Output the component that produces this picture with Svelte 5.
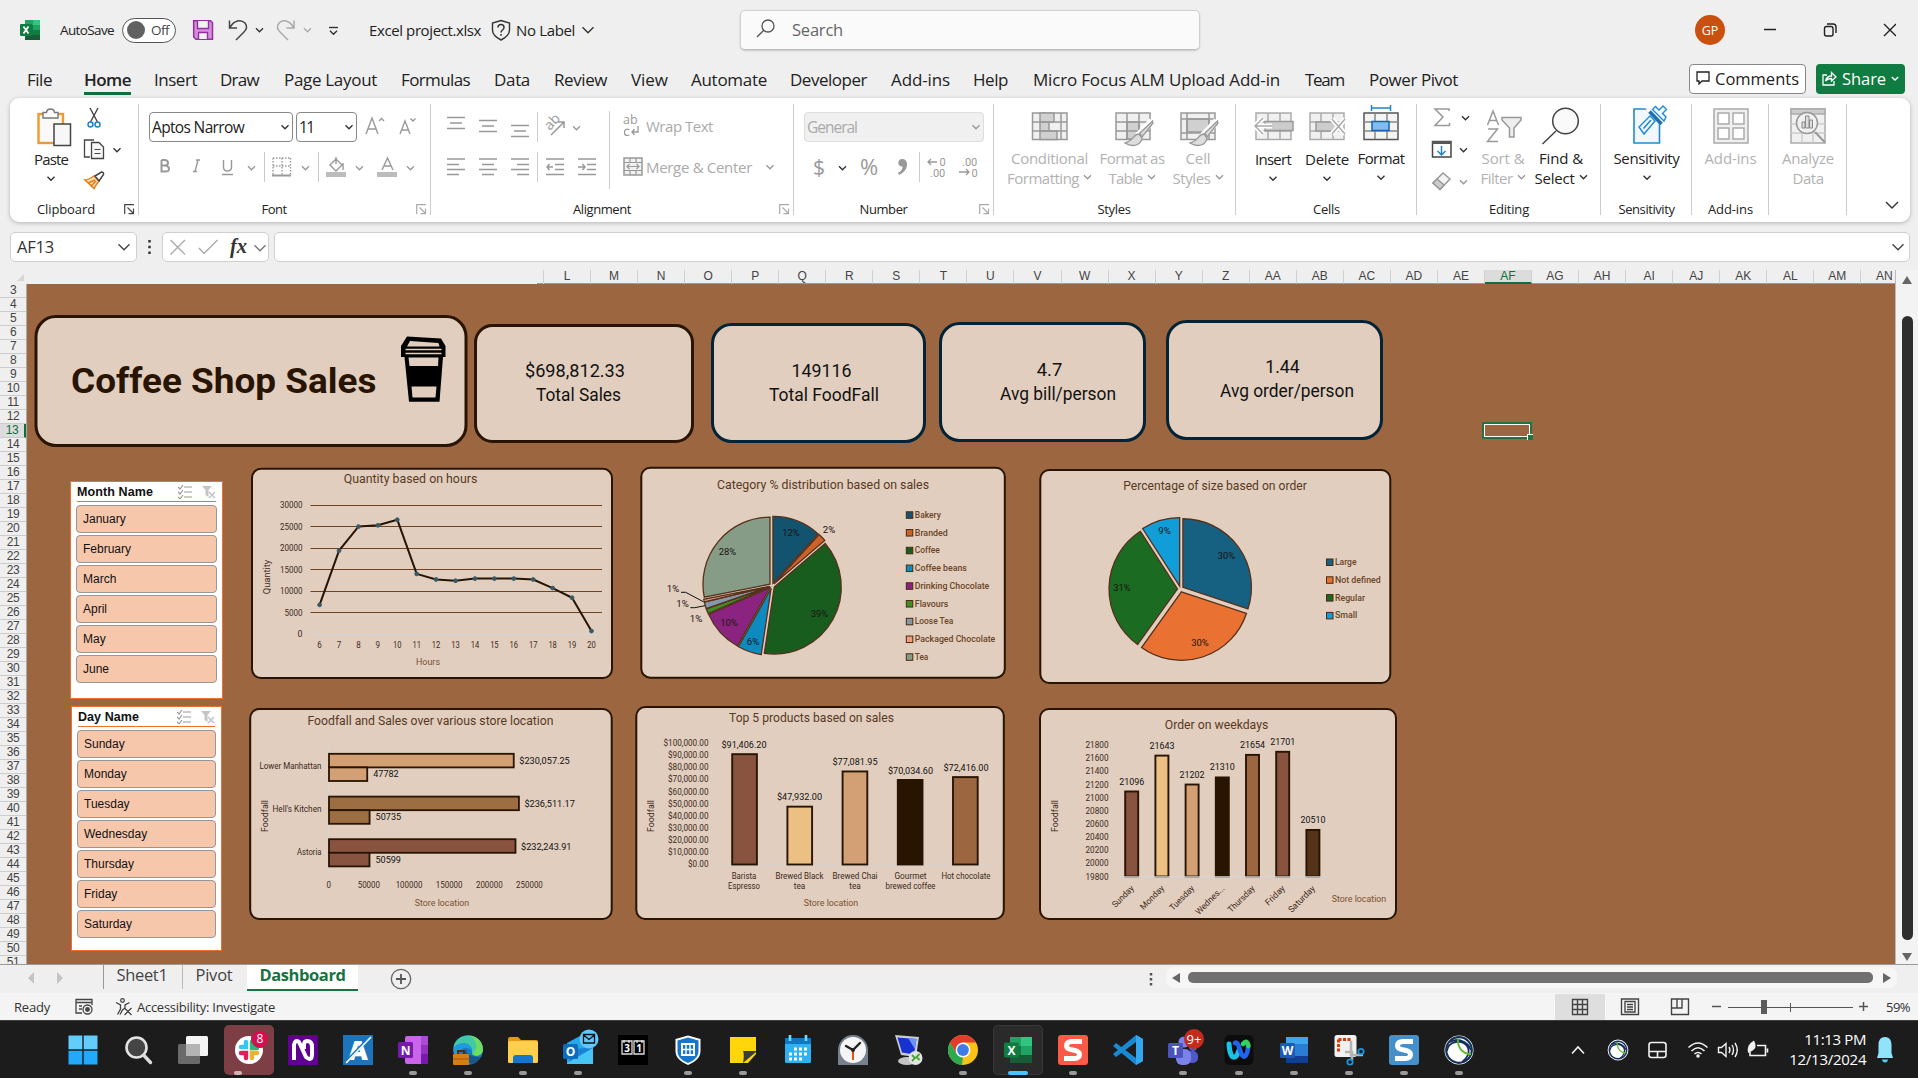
<script>
  // Spreads a label's letters so that it fills the advance width given in pixels.
  function fit(node, width) {
    const natural = node.getBoundingClientRect().width;
    const n = node.textContent.length;
    if (n > 0) node.style.letterSpacing = ((width - natural) / n).toFixed(3) + 'px';
  }

  const tabs = [
    ['File', 27, 25], ['Home', 84, 47], ['Insert', 154, 43], ['Draw', 220, 39], ['Page Layout', 284, 93],
    ['Formulas', 401, 69], ['Data', 494, 36], ['Review', 554, 53], ['View', 631, 37], ['Automate', 691, 76],
    ['Developer', 790, 77], ['Add-ins', 891, 59], ['Help', 973, 35], ['Micro Focus ALM Upload Add-in', 1033, 247],
    ['Team', 1305, 39], ['Power Pivot', 1369, 89]
  ].map(([name, x, w], i, all) => ({ name, w, gap: i ? x - all[i - 1][1] - all[i - 1][2] : x }));

  const columns = ['L','M','N','O','P','Q','R','S','T','U','V','W','X','Y','Z','AA','AB','AC','AD','AE','AF','AG','AH','AI','AJ','AK','AL','AM','AN'];
  const rows = Array.from({ length: 49 }, (_, i) => i + 3);
  const months = ['January', 'February', 'March', 'April', 'May', 'June'];
  const days = ['Sunday', 'Monday', 'Tuesday', 'Wednesday', 'Thursday', 'Friday', 'Saturday'];

  const DARK = '#281400';
  const hours = [[6,6850],[7,19450],[8,25050],[9,25350],[10,26650],[11,14050],[12,12750],[13,12450],[14,12950],[15,12950],[16,12950],[17,12750],[18,10750],[19,8500],[20,750]];
  const hx = (i) => 319.6 + i * 19.42;
  const hy = (v) => 634.3 - v * 0.0043;
  const line = hours.map(([, v], i) => `${hx(i)},${hy(v)}`).join(' ');

  function slices(data, cx, cy, r, e) {
    const total = data.reduce((s, d) => s + d.v, 0);
    let a = 0;
    return data.map((d) => {
      const a0 = a, a1 = (a += (d.v / total) * Math.PI * 2), m = (a0 + a1) / 2;
      const ox = cx + Math.sin(m) * e, oy = cy - Math.cos(m) * e;
      const p = (t) => `${(ox + Math.sin(t) * r).toFixed(2)} ${(oy - Math.cos(t) * r).toFixed(2)}`;
      return { ...d, d: `M${ox} ${oy}L${p(a0)}A${r} ${r} 0 ${a1 - a0 > Math.PI ? 1 : 0} 1 ${p(a1)}Z` };
    });
  }
  const category = slices([
    { n: 'Bakery', v: 11.78, c: '#12536f', w: 26, l: ['12%', 791, 536] },
    { n: 'Branded', v: 1.95, c: '#cb622a', w: 33, l: ['2%', 829, 533] },
    { n: 'Coffee', v: 38.63, c: '#185c1e', w: 25, l: ['39%', 819.5, 617] },
    { n: 'Coffee beans', v: 5.74, c: '#0d8abf', w: 52, l: ['6%', 753, 645] },
    { n: 'Drinking Chocolate', v: 10.36, c: '#8b2480', w: 74.5, l: ['10%', 729, 626] },
    { n: 'Flavours', v: 1.2, c: '#3f8f27', w: 33.5, l: ['1%', 696, 622] },
    { n: 'Loose Tea', v: 1.6, c: '#8597a9', w: 38.5, l: ['1%', 682.5, 607] },
    { n: 'Packaged Chocolate', v: 0.63, c: '#f09c84', w: 80.5, l: ['1%', 673, 592] },
    { n: 'Tea', v: 28.1, c: '#869c86', w: 13.5, l: ['28%', 727.5, 555] }
  ], 772, 585.8, 67, 2.6);
  const sizes = slices([
    { n: 'Large', v: 30.1, c: '#166082', w: 21.5, l: ['30%', 1226.5, 559] },
    { n: 'Not defined', v: 29.8, c: '#e97132', w: 45.7, l: ['30%', 1200, 646] },
    { n: 'Regular', v: 31, c: '#1b6b22', w: 30, l: ['31%', 1122, 591] },
    { n: 'Small', v: 9.1, c: '#109dd8', w: 22.3, l: ['9%', 1164.5, 534] }
  ], 1180.5, 589, 68.5, 3);

  const stores = [
    { n: 'Lower Manhattan', w: 62, y: 753.8, s: 230057.25, sl: '$230,057.25', f: 47782, c: '#d2a074' },
    { n: "Hell's Kitchen", w: 49, y: 796.6, s: 236511.17, sl: '$236,511.17', f: 50735, c: '#9c6e42' },
    { n: 'Astoria', w: 24.5, y: 839.2, s: 232243.91, sl: '$232,243.91', f: 50599, c: '#88543f' }
  ];
  const products = [
    { n: ['Barista', 'Espresso'], w: [24.5, 32], v: 91406.2, l: '$91,406.20', c: '#88543f', ly: 747.5 },
    { n: ['Brewed Black', 'tea'], w: [48, 11.5], v: 47932, l: '$47,932.00', c: '#ecbf83', ly: 799.5 },
    { n: ['Brewed Chai', 'tea'], w: [45, 11.5], v: 77081.95, l: '$77,081.95', c: '#d2a074', ly: 764.5 },
    { n: ['Gourmet', 'brewed coffee'], w: [32, 50], v: 70034.6, l: '$70,034.60', c: DARK, ly: 773.5 },
    { n: ['Hot chocolate'], w: [49], v: 72416, l: '$72,416.00', c: '#9c6640', ly: 770.5 }
  ];
  const weekdays = [
    { n: 'Sunday', v: 21096, c: '#88543f', ly: 785, w: 27 }, { n: 'Monday', v: 21643, c: '#ecbf83', ly: 749, w: 30 },
    { n: 'Tuesday', v: 21202, c: '#d2a074', ly: 778.3, w: 31 }, { n: 'Wednes...', v: 21310, c: DARK, ly: 770, w: 37 },
    { n: 'Thursday', v: 21654, c: '#9c6640', ly: 748, w: 34 }, { n: 'Friday', v: 21701, c: '#88543f', ly: 745.3, w: 24 },
    { n: 'Saturday', v: 20510, c: '#553318', ly: 823, w: 34 }
  ];

  const letter = (ch, x, y, s, f = '#fff', w = 700) => `<text x="${x}" y="${y}" font-family="Open Sans, sans-serif" font-weight="${w}" font-size="${s}" fill="${f}" text-anchor="middle">${ch}</text>`;
  const office = (ch, a, b, c, d) => `<rect x="-8" y="-13" width="22" height="26" rx="2" fill="${b}"/><path d="M-8-13H14v7H-8z" fill="${a}"/><path d="M-8 6H14v7H-8z" fill="${c}"/><rect x="-14" y="-7" width="15" height="15" rx="1.5" fill="${d}"/>${letter(ch, -6.5, 5, 12)}`;
  const orb = '<circle r="14.5" fill="#fff"/><circle r="12.8" fill="none" stroke="#16325c" stroke-width="2.2"/><path d="M-12 1C-11-9 3-11 8-4C12 2 8 9 3 12M-9-8C-2-12 8-10 12 0" fill="none" stroke="#16325c" stroke-width="1.8"/><path d="M-1-12C-2-3 3 4 12 4" fill="none" stroke="#62b82c" stroke-width="1.8"/>';
  const apps = [
    { art: '<path d="M-14.5-14.5H-.7V-.7H-14.5zM.7-14.5H14.5V-.7H.7z" fill="#62cdfb"/><path d="M-14.5.7H-.7V14.5H-14.5zM.7.7H14.5V14.5H.7z" fill="#22a9fa"/>' },
    { art: '<circle cx="-1.5" cy="-2.5" r="10" fill="#454545" stroke="#e4e4e4" stroke-width="2.6"/><path d="M6 5.5L12.5 12.5" stroke="#ddd" stroke-width="3.4" stroke-linecap="round"/>' },
    { art: '<rect x="-15" y="-6" width="22" height="20" rx="1.5" fill="#6a6a6a"/><rect x="-7" y="-14" width="22" height="20" rx="1.5" fill="#f4f4f4"/><path d="M-7-6H7V6H-7z" fill="#b4b4b4"/>' },
    { hot: true, run: 'slack', art: '<circle r="14" fill="#fff"/><g stroke-width="4.4" stroke-linecap="round"><path d="M-3-8V-3H-8" stroke="#36c5f0" fill="none"/><path d="M8-2H3V-8" stroke="#2eb67d" fill="none"/><path d="M-8 3H-3V8" stroke="#e01e5a" fill="none"/><path d="M3 8V3H8" stroke="#ecb22e" fill="none"/></g><circle cx="11" cy="-11" r="8.6" fill="#d80c50" stroke="#7d3f45"/>' + letter('8', 11, -6.6, 12, '#fff', 400) },
    { art: '<path d="M-15-15H15V15H-15z" fill="#5f0093"/><path d="M-9 10V-5Q-8-11-4-8L3 7Q9 12 9 4V-3Q9-9 4-9Q1-9 1-5V-1" fill="none" stroke="#fff" stroke-width="4"/>' },
    { art: '<path d="M-15-15H15V15H-15z" fill="#1c75bc"/>' + letter('A', 0, 10, 27, '#fff', 800) + '<path d="M12-13L-13 13" stroke="#1c75bc" stroke-width="3"/><path d="M13-13L-12 13" stroke="#fff" stroke-width="1.6"/>' },
    { run: 1, art: '<rect x="-8" y="-14" width="23" height="28" rx="2" fill="#ca64ea"/><path d="M8-14H15V-5H8z" fill="#ae4bd5"/><path d="M8-5H15V4H8z" fill="#9332bf"/><path d="M8 4H15V14H8z" fill="#7719aa"/><rect x="-15" y="-8" width="15" height="16" rx="1.5" fill="#7719aa"/>' + letter('N', -7.5, 4.5, 12) },
    { run: 1, art: '<circle r="14.8" fill="#1679c4"/><path d="M-14.5-2C-13-19 15-19 15 0C14 8 3 7 4 1C4-8-9-9-14.5-2Z" fill="#42c8a7"/><path d="M2-14.5C10-13 15-8 15 0C14 6 8 7 4 4C12-2 8-10 2-14.5Z" fill="#6edb62"/><path d="M-14.5-2C-9-9 3-8 4 1C0-4-8-3-9 5C-13 8-15 3-14.5-2Z" fill="#1c9be4"/><path d="M-2-1Q-2 7 14 7Q10 13 4 14Q-4 11-5 4Z" fill="#1c1c1c" opacity=".35"/><rect x="-15" y="4" width="16" height="11" rx="1" fill="#d67d14"/><path d="M-10 4V1H-4V4" fill="none" stroke="#5b2c05" stroke-width="2"/><path d="M-15 9H1" stroke="#a65609"/>' },
    { run: 1, art: '<path d="M-15-11Q-15-13-13-13H-5L-2-10H13Q15-10 15-8V6H-15z" fill="#e29b13"/><rect x="-15" y="-9" width="30" height="22" rx="1.5" fill="#ffcf4d"/><path d="M-10 13V8Q-10 5-7 5H7Q10 5 10 8V13z" fill="#1477cf"/>' },
    { run: 1, art: '<path d="M-11-7L2-14L15-4V13H-11z" fill="#28a8ea"/><path d="M-11 0L15-3V14H-8z" fill="#1a82d4"/><path d="M-11 13L15-2V14H-11z" fill="#48c5f5"/><rect x="-15" y="-6" width="15" height="15" rx="1.5" fill="#0f6cbd"/>' + letter('O', -7.5, 6, 12) + '<circle cx="11" cy="-11" r="9.5" fill="#60c8fa"/><path d="M5.5-15.5H16.5V-7H5.5zM5.5-15L11-10.5L16.5-15" fill="none" stroke="#111" stroke-width="1.3"/>' },
    { art: '<path d="M-15-15H15V15H-15z" fill="#000"/><path d="M-11-9H-1V4H-11zM1-9H11V4H1zM-9-10V-7M-4-10V-7M4-10V-7M9-10V-7" fill="none" stroke="#ddd" stroke-width="1.3"/>' + letter('3', -6, 1.5, 10) + letter('1', 6, 1.5, 10) },
    { run: 1, art: '<path d="M0-14.5L12.5-11V1C12.5 8 7 12 0 15C-7 12-12.5 8-12.5 1V-11Z" fill="#fff"/><path d="M0-12.5L10.5-9.5V1C10.5 7 6 10.5 0 13C-6 10.5-10.5 7-10.5 1V-9.5Z" fill="#1776c9"/><path d="M-6-6H6V5H-6z" fill="none" stroke="#fff" stroke-width="2"/><path d="M-6-.5H6M-2-6V5M2-6V5" stroke="#fff" stroke-width="1.4"/>' },
    { run: 1, art: '<path d="M-13-13H13V4L5 13H-13z" fill="#ffd60a"/><path d="M0 13C1 8 1 3 0 1H13V2z" fill="#3c3c3c"/>' },
    { art: '<rect x="-13" y="-12" width="26" height="25" rx="1.5" fill="#2db3f2"/><path d="M-13-6H13V-12H-13z" fill="#1276c2"/><path d="M-8-15V-9M8-15V-9" stroke="#72dcff" stroke-width="2.6"/><path d="M-4-1H11M-9 4H11M-9 9H6" stroke="#fff" stroke-width="3" stroke-dasharray="3 2"/>' },
    { art: '<path d="M-15 15V0A15 15 0 0 1 15 0V15Z" fill="#75818c"/><circle r="13" fill="#f5f5f5"/><path d="M0 0L-7-4M0 0L7-7" stroke="#222" stroke-width="2.4" stroke-linecap="round"/><path d="M0 0V10" stroke="#e2501f" stroke-width="2"/><circle r="2" fill="#222"/>' },
    { art: '<path d="M-13-15L11-13L8 7L-7 5z" fill="#c9cbd5"/><path d="M-10.5-12.5L8.5-11L6 4.5L-6 2.5z" fill="#1832cf"/><path d="M0-12L8.5-11L7-1z" fill="#6d93f5"/><ellipse cx="-1" cy="11" rx="9" ry="4" fill="#c3c3c3"/><circle cx="7.5" cy="8" r="7" fill="#e3e3e3"/><path d="M4 5L7 8L4 11M11.5 4L8.5 7L11.5 10" stroke="#43a82d" stroke-width="1.8" fill="none"/>' },
    { run: 1, art: '<circle r="15" fill="#fbc116"/><path d="M-13-7.5A15 15 0 0 1 13-7.5H0L-6.5 3.8z" fill="#e33b2e"/><path d="M-13-7.5L-6.5 3.8L0 7.5L-1 15A15 15 0 0 1-13-7.5z" fill="#2da94f"/><circle r="7.4" fill="#fff"/><circle r="5.9" fill="#3e7de8"/>' },
    { active: true, run: 'wide', art: '<rect x="-8" y="-13" width="22" height="26" rx="1.5" fill="#107c41"/><path d="M-8-13H3V-4H-8z" fill="#21a366"/><path d="M3-13H14V-4H3z" fill="#33c481"/><path d="M3-4H14V5H3z" fill="#21a366"/><path d="M-8 5H14V13H-8z" fill="#185c37"/><rect x="-14" y="-7.5" width="15" height="15" rx="1.5" fill="#107c41"/>' + letter('X', -6.5, 4.5, 12) },
    { run: 1, art: '<rect x="-15" y="-15" width="30" height="30" rx="3" fill="#fb5a48"/><path d="M9-8.5H-1Q-6.500-8.500-6.500-4Q-6.500-1 0 0Q6.500 1 6.500 4.500Q6.500 8.500 1 8.500H-9" fill="none" stroke="#fff" stroke-width="5"/>' },
    { art: '<path d="M8-15L15-11V11L8 15L-15-4L-12-7L8 8V-8L-12 7L-15 4z" fill="#1b88d2"/><path d="M8-15L15-11V11L8 15z" fill="#31a8f0"/>' },
    { run: 1, art: '<circle cx="10" cy="-3" r="4" fill="#5059c9"/><rect x="3" y="1" width="12" height="12" rx="5" fill="#5059c9"/><circle cx="1" cy="-8" r="5.5" fill="#7b83eb"/><rect x="-7" y="-1" width="15" height="16" rx="6" fill="#7b83eb"/><rect x="-15" y="-7" width="15" height="15" rx="1.5" fill="#4b53bc"/>' + letter('T', -7.5, 5, 12) + '<circle cx="11" cy="-11" r="10" fill="#c42b1c"/>' + letter('9+', 11, -6.5, 13, '#fff', 400) },
    { run: 1, art: '<rect x="-14.5" y="-15" width="29" height="30" rx="5" fill="#0c0c0c"/><path d="M-10-6C-9 12-2 9 0 0" fill="none" stroke="#19c3e6" stroke-width="5" stroke-linecap="round"/><path d="M-4-7C-1-9 0-2 2 3C5 11 9 4 9-4" fill="none" stroke="#2463ee" stroke-width="4.6" stroke-linecap="round"/><path d="M4-6Q8-11 9.500-4" fill="none" stroke="#32d35f" stroke-width="4.6" stroke-linecap="round"/>' },
    { run: 1, art: office('W', '#41a5ee', '#2b7cd3', '#103f91', '#185abd') },
    { run: 1, art: '<rect x="-14.5" y="-15" width="22" height="22" rx="2.5" fill="#f1f1f1"/><path d="M-10.5-10.5H1.5M-10.5-10.5V2" stroke="#d83b01" stroke-width="3" stroke-dasharray="3 1.5"/><path d="M2-9V5H14M-4 2H3V10" stroke="#b4b4b4" stroke-width="2.5" fill="none"/><circle cx="12" cy="1.5" r="2.7" fill="none" stroke="#1694dc" stroke-width="1.8"/><circle cx="1" cy="12" r="2.7" fill="none" stroke="#1694dc" stroke-width="1.8"/>' },
    { run: 1, art: '<rect x="-15" y="-15" width="30" height="30" rx="3" fill="#458fcb"/><path d="M9-8.5H-1Q-6.500-8.500-6.500-4Q-6.500-1 0 0Q6.500 1 6.500 4.500Q6.500 8.500 1 8.500H-9" fill="none" stroke="#fff" stroke-width="5"/>' },
    { run: 1, art: orb }
  ];
</script>

{#snippet chev(x, y, c = '#333', s = 3.5)}
  <path d="M{x - s} {y - s / 2}l{s} {s}l{s} {-s}" fill="none" stroke={c} stroke-width="1.4" />
{/snippet}

{#snippet t(x, y, s, w, size = 9, fill = '#3d2a1d', anchor = 'middle')}
  <text {x} {y} font-size={size} {fill} text-anchor={anchor} textLength={w} lengthAdjust="spacingAndGlyphs">{s}</text>
{/snippet}

{#snippet legend(items, x, y, step)}
  {#each items as s, i}
    <rect x={x} y={y + i * step - 3} width="6.5" height="6.5" fill={s.c} stroke="#4a2a10" />
    <g font-weight="500">{@render t(x + 8.5, y + i * step + 3, s.n, s.w, 9.3, '#6b4426', 'start')}</g>
  {/each}
{/snippet}

{#snippet launcher(c)}
  <svg class="launch" width="11" height="11" viewBox="0 0 11 11"><path d="M.7 10V.7H10M3.5 3.5L9.5 9.5M9.5 4.5V9.7H4.5" fill="none" stroke={c} stroke-width="1.2" /></svg>
{/snippet}

{#snippet slicer(title, w, items)}
  <header><b use:fit={w}>{title}</b>
    <svg width="38" height="14" viewBox="0 0 38 14"><path d="M6 2H14M6 7H14M6 12H14M0 2L2 4L5 0M0 7L2 9L5 5M0 12L2 14L5 10" fill="none" stroke="#999" stroke-width="1.2" /><path d="M24 1H34L30.5 5V12L27.5 10V5Z" fill="#c6c3c3" /><path d="M31 7L37 13M37 7L31 13" stroke="#c6c3c3" stroke-width="1.5" /></svg>
  </header>
  {#each items as item}<button class="pick">{item}</button>{/each}
{/snippet}

<div class="app">
  <div class="titlebar">
    <svg class="logo" width="20" height="20" viewBox="0 0 20 20"><rect x="5" width="15" height="20" rx="1.5" fill="#107c41" /><path d="M5 0H13V5H5z" fill="#21a366" /><path d="M13 0H20V5H13z" fill="#33c481" /><path d="M13 5H20V10H13z" fill="#21a366" /><path d="M5 15H20V20H5z" fill="#185c37" /><rect y="4" width="12" height="12" rx="1" fill="#107c41" /><path d="M3.5 6.5L8.5 13.5M8.5 6.5L3.5 13.5" stroke="#fff" stroke-width="1.8" /></svg>
    <span class="autosave"><span use:fit={54}>AutoSave</span></span>
    <span class="toggle"><i></i><span>Off</span></span>
    <svg width="165" height="30" viewBox="185 15 165 30" fill="none">
      <path d="M193.7 20.7H210.5L212.5 22.7V39.3H196L193.7 37Z" fill="#d58fdd" stroke="#9331a0" stroke-width="1.5" /><path d="M197.5 21V28.5H208.5V21M198.5 39V32.5H207.5V39" fill="#f2f2f2" stroke="#9331a0" stroke-width="1.4" />
      <path d="M229.5 20.5V28H237M230 27.5C234 20 241 19 245 23C248 27 246 30 244 32L236 40" stroke="#444" stroke-width="1.5" />{@render chev(259.5, 30)}
      <path d="M294 20.5V28H286.5M293.5 27.5C289.5 20 282.5 19 279 23C276 27 278 30 280 32L288 40" stroke="#aaa" stroke-width="1.5" />{@render chev(307.5, 30, '#aaa')}
      <path d="M329 27.5H338" stroke="#333" stroke-width="1.4" />{@render chev(333.5, 32.5)}
    </svg>
    <span class="doc"><span use:fit={112}>Excel project.xlsx</span></span>
    <svg class="shield" width="20" height="22" viewBox="0 0 20 22"><path d="M10 1.5L18.5 4V11C18.5 16 14 19 10 21C6 19 1.5 16 1.5 11V4Z" fill="none" stroke="#333" stroke-width="1.4" /><path d="M7 8.5C7 4.5 13 4.5 13 8.5C13 11 10 11 10 13.5M10 15V16.8" fill="none" stroke="#333" stroke-width="1.5" /></svg>
    <span class="nolabel"><span use:fit={59}>No Label</span></span>
    <svg width="14" height="14" viewBox="0 0 14 14">{@render chev(7, 7, '#333', 5.5)}</svg>
    <div class="search"><svg width="20" height="20" viewBox="0 0 20 20"><circle cx="12" cy="7" r="6" fill="none" stroke="#555" stroke-width="1.3" /><path d="M7.8 11.2L1 18" stroke="#555" stroke-width="1.4" /></svg><span use:fit={51}>Search</span></div>
    <div class="avatar">GP</div>
    <svg class="winbtns" width="136" height="20" viewBox="1760 20 136 20" fill="none" stroke="#222" stroke-width="1.4"><path d="M1764 29.5H1776M1884 24L1896 36M1896 24L1884 36" /><rect x="1824.5" y="26.5" width="8.5" height="9.5" rx="2" /><path d="M1827 24H1833Q1836 24 1836 27V33" /></svg>
  </div>

  <nav class="tabs">
    {#each tabs as tab}
      <a class:active={tab.name === 'Home'} style:margin-left="{tab.gap}px" style:width="{tab.w}px"><span use:fit={tab.w}>{tab.name}</span></a>
    {/each}
    <div class="actions">
      <button class="comments"><svg width="14" height="14" viewBox="0 0 14 14"><path d="M1 1H13V10H6L3 13V10H1Z" fill="none" stroke="#222" stroke-width="1.3" /></svg><span use:fit={84}>Comments</span></button>
      <button class="share"><svg width="15" height="15" viewBox="0 0 15 15"><path d="M5 4H1V14H12V10M3.5 10C4.5 6 6.5 5 9.5 5V1.5L14 6L9.5 10V7.5C7 7.5 5 8 3.5 10Z" fill="none" stroke="#fff" stroke-width="1.3" /></svg><span use:fit={44}>Share</span><svg width="8" height="8" viewBox="0 0 8 8">{@render chev(4, 4.5, '#fff', 3.2)}</svg></button>
    </div>
  </nav>

  <div class="ribbon">
    <section class="group clip">
      <div class="body">
        <button class="big low paste"><svg width="82" height="51" viewBox="10 98 82 51"><rect x="38.5" y="114" width="24.5" height="29" fill="#fbf9f7" stroke="#ec9a33" stroke-width="2.4" /><path d="M43 118V112.5H46.5Q47 109 50.5 109Q54 109 54.5 112.5H58V118Z" fill="#fff" stroke="#777" stroke-width="1.4" /><rect x="54" y="124" width="16.5" height="21.5" fill="#f7f7f7" stroke="#444" stroke-width="1.5" /></svg><span use:fit={34}>Paste</span><svg width="10" height="8" viewBox="0 0 10 8">{@render chev(5, 3.5)}</svg></button>
        <svg width="46" height="98" viewBox="80 98 46 98" fill="none">
          <path d="M90 108L97.5 122M98 108L90.5 122" stroke="#444" stroke-width="1.4" /><circle cx="90.5" cy="124.5" r="2.5" stroke="#1e84c8" stroke-width="1.5" /><circle cx="97.5" cy="124.5" r="2.5" stroke="#1e84c8" stroke-width="1.5" />
          <path d="M90 157H84.5V140H94" stroke="#444" stroke-width="1.3" /><path d="M91.5 142.5H99L103.5 147V158.5H91.5Z" fill="#f6f6f6" stroke="#444" stroke-width="1.3" /><path d="M94.5 149.5H100.5M94.5 153.5H100.5" stroke="#444" />{@render chev(117, 150)}
          <path d="M85 180L94 188.5C96 185 98 182 99 181L94 176C91 178 88 180 85 180Z" fill="#fde0b5" stroke="#e27a10" stroke-width="1.5" /><path d="M88 183L95 180M91 186L96 181" stroke="#e27a10" stroke-width="1.5" /><path d="M95 176L101.5 172Q104 172 103.5 174.5L99 181Z" fill="#fff" stroke="#444" stroke-width="1.5" />
        </svg>
      </div>
      <footer><span use:fit={58}>Clipboard</span>{@render launcher('#444')}</footer>
    </section>

    <section class="group font">
      <div class="body col">
        <div class="row combos"><div class="combo name"><span use:fit={92}>Aptos Narrow</span><svg width="10" height="8" viewBox="0 0 10 8">{@render chev(5, 4)}</svg></div><div class="combo size"><span>11</span><svg width="10" height="8" viewBox="0 0 10 8">{@render chev(5, 4)}</svg></div>
          <svg width="66" height="30" viewBox="360 112 66 30" fill="none" stroke="#999" stroke-width="1.4"><path d="M366 134L372 118L378 134M368 129H376M379 121L381.5 118.5L384 121M400 134L405 121L410 134M402 130H408M410.500 118.5L413 121L415.500 118.5" /></svg></div>
        <svg width="291" height="34" viewBox="139 149 291 34" fill="none" stroke="#999" stroke-width="1.4">
          <path d="M161.5 160H164.5Q168 160 168 163Q168 165.5 164.5 165.5H161.5M164.5 165.5Q169 165.5 169 169Q169 171.5 165 171.5H161.5V160" stroke-width="2" /><path d="M193 171.5H197M196 160H200M195 171.5L198 160M223.5 160V167Q223.5 171 227.5 171Q231.5 171 231.5 167V160M222 174.5H233" />
          {@render chev(251.5, 168, '#999')}<path d="M264.5 152V182M318.5 152V182" stroke="#c8c8c8" stroke-width="1" />
          <path d="M273 158H291M273 158V175M290.500 158V175M282 158V175M273 166H291" stroke-dasharray="1.5 1.5" /><path d="M272 175.5H291" stroke-width="2" />{@render chev(305.5, 168, '#999')}
          <path d="M336 159L342 165L336 171L330 165ZM336 164V157M343 163V170" /><rect x="326" y="172" width="20" height="5" fill="#bcbcbc" stroke="none" />{@render chev(359.5, 168, '#999')}
          <path d="M382 170L387.5 158L393 170M384 166H391" /><rect x="377" y="172" width="20" height="5" fill="#bcbcbc" stroke="none" />{@render chev(410.5, 168, '#999')}
        </svg>
      </div>
      <footer><span use:fit={25}>Font</span>{@render launcher('#aaa')}</footer>
    </section>

    <section class="group align">
      <div class="body">
        <svg width="186" height="98" viewBox="431 98 186 98" fill="none" stroke="#999" stroke-width="1.5">
          <path d="M447 117.5H465M450 123H462M447 128.5H465M479 120.5H497M482 126H494M479 131.5H497M511 125.5H529M514 131H526M511 136.5H529" />
          <path d="M447 159H465M447 164.5H459M447 169.5H465M447 174.5H459M479 159H497M482 164.5H494M479 169.5H497M482 174.5H494M511 159H529M517 164.5H529M511 169.5H529M517 174.5H529M546 159H564M555 164.5H564M555 169.5H564M546 174.5H564M547 167H553M549.5 164L547 167L549.5 170M578 159H596M587 164.5H596M587 169.5H596M578 174.5H596M578 167H585M582.5 164L585 167L582.5 170" />
          <path d="M537.5 112V142M537.5 152V182M609.5 111V189" stroke="#ccc" stroke-width="1" /><path d="M551 135L564 122M558 122H564V128" />{@render chev(576.5, 128, '#999')}
          <text x="0" y="0" transform="translate(550 131) rotate(-48)" font-size="14" fill="#999" stroke="none">ab</text>
        </svg>
        <div class="lines">
          <div><svg width="22" height="30" viewBox="0 0 22 30" fill="none" stroke="#999" stroke-width="1.3"><text x="0" y="13" font-size="12.500" fill="#999" stroke="none">ab</text><path d="M6.500 18.500Q1.500 17 1.500 21.500Q1.500 25.500 6.500 24M15 15V21H9M11.5 18L9 21L11.5 24" /></svg><span use:fit={67}>Wrap Text</span></div>
          <div><svg width="22" height="20" viewBox="0 0 22 20" fill="none" stroke="#999" stroke-width="1.5"><rect x="1" y="1" width="18" height="17" fill="#f0f0f0" /><path d="M1 5.5H19M1 13.5H19M7 1V5M13 1V5M7 14V18M13 14V18M4 9.5H16M6.5 7L4 9.5L6.5 12M13.5 7L16 9.5L13.5 12" stroke-width="1.2" /></svg><span use:fit={106}>Merge &amp; Center</span><svg class="mchev" width="10" height="8" viewBox="0 0 10 8">{@render chev(5, 4, '#999')}</svg></div>
        </div>
      </div>
      <footer><span use:fit={58}>Alignment</span>{@render launcher('#aaa')}</footer>
    </section>

    <section class="group number">
      <div class="body col">
        <div class="combo general"><span use:fit={50}>General</span><svg width="10" height="8" viewBox="0 0 10 8">{@render chev(5, 4, '#999')}</svg></div>
        <svg class="numstrip" width="200" height="36" viewBox="794 149 200 36" fill="#999">
          <text x="813" y="175" font-size="21">$</text>{@render chev(842.5, 168)}<text x="860" y="175" font-size="22">%</text><path d="M902 159C897 159 897 167 902.5 166.5C902.5 170 900 172 898 173L899 175C904 172.5 907 169 907 164.5Q907 159 902 159Z" /><path d="M919.5 152V182" stroke="#ccc" />
          <g font-size="11" font-family="Roboto, sans-serif"><text x="939.500" y="166">0</text><text x="930" y="177">.00</text><text x="962" y="166">.00</text><text x="971.500" y="177">0</text></g><path d="M937 162H928M931 159L928 162L931 165M959 172H969M966 169L969 172L966 175" fill="none" stroke="#999" stroke-width="1.3" />
        </svg>
      </div>
      <footer><span use:fit={48}>Number</span>{@render launcher('#aaa')}</footer>
    </section>

    <section class="group styles dis">
      <div class="body">
        <button class="big cond"><svg width="64" height="51" viewBox="1018 98 64 51" fill="#f0f0f0" stroke="#999" stroke-width="1.5"><path d="M1032.5 113H1067V139.5H1032.5Z" /><path d="M1040 113H1054V122H1040ZM1040 131H1057V139.5H1040ZM1040 122H1049V131H1040Z" fill="#d0d0d0" /><path d="M1032 122H1067M1032 131H1067M1061 113V139" /></svg><span use:fit={77}>Conditional</span><span class="l2"><span use:fit={72}>Formatting</span><svg width="9" height="8" viewBox="0 0 9 8">{@render chev(4.5, 3, '#999')}</svg></span></button>
        <button class="big fmt"><svg width="64" height="51" viewBox="1100 98 64 51" fill="#f0f0f0" stroke="#999" stroke-width="1.5"><path d="M1116 113H1150V139.5H1116Z" /><path d="M1127 122H1139V139H1127Z" fill="#d0d0d0" /><path d="M1116 122H1150M1116 131H1150M1127 113V139M1139 113V139" /><path d="M1152 121L1138 136" stroke="#fff" stroke-width="7" /><path d="M1152.5 121L1140 133L1142 137L1153 123ZM1139 134C1133 134 1134 141 1125 143C1133 148 1141 145 1142 138Z" fill="#ddd" stroke-width="1.3" /></svg><span use:fit={65}>Format as</span><span class="l2"><span use:fit={34}>Table</span><svg width="9" height="8" viewBox="0 0 9 8">{@render chev(4.5, 3, '#999')}</svg></span></button>
        <button class="big cell"><svg width="54" height="51" viewBox="1171 98 54 51" fill="#f0f0f0" stroke="#999" stroke-width="1.5"><path d="M1181 113H1215V139.5H1181Z" /><path d="M1187 119H1209V132H1187Z" fill="#d0d0d0" /><path d="M1181 119H1215M1181 133H1215M1187 113V139M1209 113V139" /><path d="M1217 121L1203 136" stroke="#fff" stroke-width="7" /><path d="M1217.5 121L1205 133L1207 137L1218 123ZM1204 134C1198 134 1199 141 1190 143C1198 148 1206 145 1207 138Z" fill="#ddd" stroke-width="1.3" /></svg><span use:fit={25}>Cell</span><span class="l2"><span use:fit={38}>Styles</span><svg width="9" height="8" viewBox="0 0 9 8">{@render chev(4.5, 3, '#999')}</svg></span></button>
      </div>
      <footer><span use:fit={33}>Styles</span></footer>
    </section>

    <section class="group cells">
      <div class="body">
        <button class="big low"><svg width="54" height="51" viewBox="1246 98 54 51" fill="#f0f0f0" stroke="#aaa" stroke-width="1.5"><path d="M1256 113H1291V139.5H1256Z" /><path d="M1256 122H1291M1256 131H1291M1268 113V139M1280 113V139" /><path d="M1265 121.500H1293V130.500H1265Z" fill="#ccc" stroke="#999" /><path d="M1272 126H1255M1263 118L1255 126L1263 134" fill="none" stroke="#fff" stroke-width="5" /><path d="M1272 126H1255M1263 118L1255 126L1263 134" fill="none" /></svg><span use:fit={36}>Insert</span><svg width="10" height="8" viewBox="0 0 10 8">{@render chev(5, 3.5)}</svg></button>
        <button class="big low"><svg width="54" height="51" viewBox="1300 98 54 51" fill="#f0f0f0" stroke="#aaa" stroke-width="1.5"><path d="M1310 113H1344V139.5H1310Z" /><path d="M1310 122H1344M1310 131H1344M1321 113V139M1333 113V139" /><path d="M1316 122H1336V131H1316Z" fill="#ccc" stroke="#999" /><path d="M1332 119L1345 134M1345 119L1332 134" stroke="#fff" stroke-width="5" /><path d="M1332 119L1345 134M1345 119L1332 134" /></svg><span use:fit={44}>Delete</span><svg width="10" height="8" viewBox="0 0 10 8">{@render chev(5, 3.5)}</svg></button>
        <button class="big"><svg width="54" height="51" viewBox="1354 98 54 51" fill="#f4f4f4" stroke="#555" stroke-width="1.5"><path d="M1364 113H1398V139.5H1364Z" /><path d="M1364 122H1398M1364 131H1398M1375 113V139M1387 113V139" stroke="#888" /><path d="M1372 121.5H1389V130.5H1372Z" fill="#83bdec" stroke="#1566b0" /><path d="M1371.5 108H1390.5M1371.5 105V111M1390.5 105V111" stroke="#1e84c8" /></svg><span use:fit={47}>Format</span><svg width="10" height="8" viewBox="0 0 10 8">{@render chev(5, 3.5)}</svg></button>
      </div>
      <footer><span use:fit={27}>Cells</span></footer>
    </section>

    <section class="group editing">
      <div class="body">
        <svg class="edstrip" width="58" height="98" viewBox="1417 98 58 98" fill="none" stroke="#999" stroke-width="1.5"><path d="M1449 111V109H1435L1443 117L1435 125.5H1449.5V123" />{@render chev(1465.5, 118)}
          <path d="M1432.5 141.5H1451V157H1432.5Z" fill="#fff" stroke="#444" /><path d="M1432 142.5H1451" stroke="#555" stroke-width="3" /><path d="M1441.5 146V155M1437.5 151L1441.5 155L1445.5 151" stroke="#1e84c8" />{@render chev(1463.5, 150)}
          <path d="M1433 183L1443 173L1450 179L1440 189.5Z" fill="#f4f4f4" /><path d="M1433 183L1437 179L1444 185L1440 189.5Z" fill="#ccc" />{@render chev(1463.5, 182, '#999')}</svg>
        <button class="big sort dis"><svg width="58" height="51" viewBox="1475 98 58 51" fill="none" stroke="#999" stroke-width="1.5"><path d="M1488.5 125L1494 111L1499.5 125M1490.5 120.5H1497.5M1489 129H1498.5L1488.5 141.5H1499" /><path d="M1503 117.5H1522V120L1515 128V137H1510.5V128L1503 120Z" fill="#eee" /></svg><span use:fit={43}>Sort &amp;</span><span class="l2"><span use:fit={32}>Filter</span><svg width="9" height="8" viewBox="0 0 9 8">{@render chev(4.5, 3, '#999')}</svg></span></button>
        <button class="big"><svg width="58" height="51" viewBox="1533 98 58 51" fill="#fafafa" stroke="#444" stroke-width="1.5"><circle cx="1566.5" cy="121" r="12.8" /><path d="M1557 131L1543.5 144" /></svg><span use:fit={44}>Find &amp;</span><span class="l2"><span use:fit={40}>Select</span><svg width="9" height="8" viewBox="0 0 9 8">{@render chev(4.5, 3)}</svg></span></button>
      </div>
      <footer><span use:fit={40}>Editing</span></footer>
    </section>

    <section class="group sens">
      <div class="body"><button class="big"><svg width="60" height="51" viewBox="1617 98 60 51" fill="#f0f7fd" stroke="#1e8bd2" stroke-width="1.6"><path d="M1634 109H1659.5V143H1634Z" /><path d="M1648 109H1662V124L1650 112Z" fill="#fff" stroke="#fff" stroke-width="3" /><path d="M1639 127L1650 116L1655 121L1644 134Z" stroke-width="1.4" /><path d="M1643.500 128.500L1651 120" /><path d="M1649.500 111.500L1661.500 124" stroke="#1e6fae" stroke-width="3.600" /><path d="M1652.500 109.500L1664 121L1666 117L1662.500 113.500L1666.500 109.500L1663 106L1659 110L1655.500 106.500Z" stroke-width="1.400" /></svg><span use:fit={66}>Sensitivity</span><svg width="10" height="8" viewBox="0 0 10 8">{@render chev(5, 3.5)}</svg></button></div>
      <footer><span use:fit={56}>Sensitivity</span></footer>
    </section>
    <section class="group addins dis">
      <div class="body"><button class="big"><svg width="50" height="51" viewBox="1706 98 50 51" fill="#fff" stroke="#aaa" stroke-width="1.5"><path d="M1714 109H1748V143H1714Z" fill="#f0f0f0" /><path d="M1718 113H1729V124H1718ZM1733 113H1744V124H1733ZM1718 128H1729V139H1718ZM1733 128H1744V139H1733Z" /></svg><span use:fit={52}>Add-ins</span></button></div>
      <footer><span use:fit={45}>Add-ins</span></footer>
    </section>
    <section class="group analyze dis">
      <div class="body"><button class="big"><svg width="50" height="51" viewBox="1783 98 50 51" fill="#f0f0f0" stroke="#aaa" stroke-width="1.5"><path d="M1791 109H1825V143H1791Z" /><path d="M1791 109H1825V114H1791Z" fill="#ccc" /><path d="M1791 124H1825M1791 133H1825M1802 134V143M1813 134V143" stroke="#ccc" /><circle cx="1807" cy="123" r="10.5" stroke="#999" /><path d="M1815 132L1825 142.5" stroke="#999" stroke-width="2" /><path d="M1802 122H1805V128H1802ZM1805.5 116H1809V128H1805.5ZM1809.5 120H1812.5V128H1809.5Z" fill="#ddd" stroke="#888" stroke-width="1" /></svg><span use:fit={52}>Analyze</span><span use:fit={31}>Data</span></button></div>
      <footer></footer>
    </section>
    <svg class="collapse" width="14" height="14" viewBox="0 0 14 14">{@render chev(7, 7, '#333', 6)}</svg>
  </div>

  <div class="formula">
    <div class="box ref"><span use:fit={37}>AF13</span><svg width="14" height="10" viewBox="0 0 14 10">{@render chev(7, 5, '#444', 5.5)}</svg></div>
    <svg width="25" height="16" viewBox="0 0 25 16"><path d="M12.5 1V15" stroke="#333" stroke-width="2.5" stroke-dasharray="2.5 3.2" /></svg>
    <div class="box fx"><svg width="105" height="28" viewBox="163 233 105 28" fill="none" stroke="#aaa" stroke-width="1.4"><path d="M170.5 240L185 254.5M185 240L170.5 254.5M199 248L204 253.5L217.5 240" /><text x="230" y="253" font-family="Liberation Serif, serif" font-style="italic" font-weight="700" font-size="21" fill="#333" stroke="none" textLength="17" lengthAdjust="spacingAndGlyphs">fx</text>{@render chev(260, 248, '#777', 5.5)}</svg></div>
    <div class="box entry"><svg width="14" height="10" viewBox="0 0 14 10">{@render chev(7, 5, '#444', 5.5)}</svg></div>
  </div>

  <div class="sheet">
    <div class="corner"><svg width="7" height="7" viewBox="0 0 7 7"><path d="M7 0V7H0Z" fill="#d6d6d6" /></svg></div>
    <div class="cols">
      <div class="frozen"></div>
      {#each columns as c}<div class:sel={c === 'AF'}>{c}</div>{/each}
    </div>
    <div class="vscroll"><svg width="12" height="10" viewBox="0 0 12 10"><path d="M6 1L11 9H1Z" fill="#666" /></svg><i></i><svg width="12" height="10" viewBox="0 0 12 10"><path d="M6 9L11 1H1Z" fill="#666" /></svg></div>
    <div class="rows">{#each rows as r}<div class:sel={r === 13}>{r}</div>{/each}</div>
    <div class="canvas">
      <svg class="shape s-title" viewBox="34 315 434 132">
        <rect x="36" y="316.5" width="430" height="129" rx="20" fill="#e1cebe" stroke={DARK} stroke-width="3" />
        <text x="71" y="392.5" font-size="35" font-weight="700" fill={DARK} textLength="305.5" lengthAdjust="spacingAndGlyphs">Coffee Shop Sales</text>
        <path d="M407 336.5L441 338.5L445.5 346V357H443L439.5 401.7H409L404.5 357H401V346ZM410 341L407 346.5H439.5L438.5 343Z" fill-rule="evenodd" /><path d="M405.5 349.5H441.5M405.5 353.5H441.5" stroke="#e1cebe" stroke-width="1.3" /><path d="M408.5 357.5H438.5L438 366H409.5ZM411.5 386.5H436.5L435.5 397.5H412.5Z" fill="#e1cebe" />
      </svg>
      <svg class="shape s-sales" viewBox="474 324 220 119"><rect x="475.5" y="325.5" width="217" height="116" rx="17" fill="#e1cebe" stroke={DARK} stroke-width="3" />{@render t(575, 377, '$698,812.33', 100, 18, '#111')}{@render t(578.5, 401, 'Total Sales', 85, 18, '#111')}</svg>
      <svg class="shape s-foot" viewBox="711 323 215 120"><rect x="712.5" y="324.5" width="212" height="117" rx="19" fill="#e1cebe" stroke="#032436" stroke-width="3" />{@render t(821.5, 377, '149116', 60, 18, '#111')}{@render t(824, 401, 'Total FoodFall', 110, 18, '#111')}</svg>
      <svg class="shape s-bill" viewBox="939 322 207 120"><rect x="940.5" y="323.5" width="204" height="117" rx="19" fill="#e1cebe" stroke="#032436" stroke-width="3" />{@render t(1049.5, 376, '4.7', 25.5, 18, '#111')}{@render t(1058, 400, 'Avg bill/person', 116, 18, '#111')}</svg>
      <svg class="shape s-order" viewBox="1166 320 217 120"><rect x="1167.5" y="321.5" width="214" height="117" rx="19" fill="#e1cebe" stroke="#032436" stroke-width="3" />{@render t(1282.5, 373, '1.44', 34.5, 18, '#111')}{@render t(1287, 397, 'Avg order/person', 134, 18, '#111')}</svg>
      <div class="selcell"><i></i></div>
      <div class="slicer sl-month">{@render slicer('Month Name', 76, months)}</div>
      <div class="slicer sl-day">{@render slicer('Day Name', 61, days)}</div>

      <svg class="shape c1" viewBox="251 467 362 212">
        <rect x="252" y="468.8" width="360" height="209.2" rx="9" fill="#e1cebe" stroke={DARK} stroke-width="2" />
        {@render t(410.5, 483, 'Quantity based on hours', 133.5, 13.5, '#59391f')}
        {#each [0, 5000, 10000, 15000, 20000, 25000, 30000] as v}
          <path d="M310.5 {Math.floor(hy(v)) + 0.5}H602" stroke={v ? '#6e4322' : '#d5d5d5'} />{@render t(302.5, hy(v) + 3, String(v), v ? String(v).length * 4.5 : 5, 9, '#3d2a1d', 'end')}
        {/each}
        <polyline points={line} fill="none" stroke={DARK} stroke-width="2" stroke-linejoin="round" />
        {#each hours as [h, v], i}<circle cx={hx(i)} cy={hy(v)} r="1.9" fill="#5d4c42" stroke="#1e6585" />{@render t(hx(i), 648.3, String(h), h > 9 ? 8.5 : 4.5, 9)}{/each}
        {@render t(428, 665.3, 'Hours', 24, 9.5, '#7b5130')}
        <g transform="translate(270 577) rotate(-90)">{@render t(0, 0, 'Quantity', 34.5, 9.5)}</g>
      </svg>

      <svg class="shape c2" viewBox="640 466 366 213">
        <rect x="641.3" y="467.7" width="363.5" height="210" rx="9" fill="#e1cebe" stroke={DARK} stroke-width="2" />
        {@render t(823, 489, 'Category % distribution based on sales', 212, 13.5, '#59391f')}
        {#each category as s}<path d={s.d} fill={s.c} stroke="#55301a" stroke-width="1.3" />{/each}
        {#each category as s}{@render t(s.l[1], s.l[2], s.l[0], s.l[0].length > 2 ? 17.5 : 12.5, 9.5, '#1a1410')}{/each}
        <path d="M681 592.3H685.7L703.3 601.7M690.3 607.7H694.7L705 605.7" fill="none" stroke="#111" />
        {@render legend(category, 906.3, 514.8, 17.75)}
      </svg>

      <svg class="shape c3" viewBox="1039 469 353 215">
        <rect x="1040.3" y="470" width="350" height="213" rx="9" fill="#e1cebe" stroke={DARK} stroke-width="2" />
        {@render t(1215, 490, 'Percentage of size based on order', 183.5, 13.5, '#59391f')}
        {#each sizes as s}<path d={s.d} fill={s.c} stroke="#55301a" stroke-width="1.3" />{@render t(s.l[1], s.l[2], s.l[0], s.l[0].length > 2 ? 17.5 : 12.5, 9.5, '#1a1410')}{/each}
        {@render legend(sizes, 1326.5, 562, 17.8)}
      </svg>

      <svg class="shape c4" viewBox="249 708 364 212">
        <rect x="250.2" y="709" width="361.5" height="210" rx="9" fill="#e1cebe" stroke={DARK} stroke-width="2" />
        {@render t(430.5, 725, 'Foodfall and Sales over various store location', 246, 13.5, '#59391f')}
        <path d="M328.5 746V874" stroke="#d5d5d5" />
        {#each stores as s}
          <rect x="329" y={s.y} width={s.s * 0.000803} height="13.6" fill={s.c} stroke={DARK} stroke-width="1.8" /><rect x="329" y={s.y + 13.6} width={s.f * 0.0008} height="13.6" fill={s.c} stroke={DARK} stroke-width="1.8" />
          {@render t(334.5 + s.s * 0.000803, s.y + 10.3, s.sl, 50.5, 9.8, '#111', 'start')}{@render t(335 + s.f * 0.0008, s.y + 23.5, String(s.f), 25.5, 9.8, '#111', 'start')}
          {@render t(321.5, s.y + 15.5, s.n, s.w, 8.5, '#3d2a1d', 'end')}
        {/each}
        {#each [0, 50000, 100000, 150000, 200000, 250000] as v}{@render t(328.7 + v * 0.000803, 888, String(v), v ? String(v).length * 4.45 : 4.5, 9)}{/each}
        {@render t(442, 906, 'Store location', 54.5, 9.5, '#7b5130')}
        <g transform="translate(267.5 816) rotate(-90)">{@render t(0, 0, 'Foodfall', 32, 9.5)}</g>
      </svg>

      <svg class="shape c5" viewBox="635 706 370 214">
        <rect x="636.3" y="707" width="367.5" height="212" rx="9" fill="#e1cebe" stroke={DARK} stroke-width="2" />
        {@render t(811.5, 722, 'Top 5 products based on sales', 165, 13.5, '#59391f')}
        {#each Array(11) as _, i}{@render t(708.5, 867.3 - i * 12.12, i ? `$${i * 10},000.00` : '$0.00', i > 9 ? 45 : i ? 40.5 : 20.5, 9, '#3d2a1d', 'end')}{/each}
        <path d="M717 865.3H993.5" stroke="#d5d5d5" />
        {#each products as p, i}
          <rect x={732.2 + i * 55.2} y={864.5 - p.v * 0.001207} width="24.7" height={p.v * 0.001207} fill={p.c} stroke={DARK} stroke-width="1.9" />
          {@render t(744 + i * 55.5, p.ly, p.l, 45, 9.8, '#111')}
          {#each p.n as n, j}{@render t(744 + i * 55.5, 879.3 + j * 10, n, p.w[j], 8.7)}{/each}
        {/each}
        {@render t(831, 906, 'Store location', 54.5, 9.5, '#7b5130')}
        <g transform="translate(654 816) rotate(-90)">{@render t(0, 0, 'Foodfall', 32, 9.5)}</g>
      </svg>

      <svg class="shape c6" viewBox="1039 708 358 212">
        <rect x="1040" y="709" width="356" height="210" rx="9" fill="#e1cebe" stroke={DARK} stroke-width="2" />
        {@render t(1216.5, 729, 'Order on weekdays', 103.5, 13.5, '#59391f')}
        {#each Array(11) as _, i}{@render t(1108.5, 879.5 - i * 13.13, String(19800 + i * 200), 23, 9.2, '#3d2a1d', 'end')}{/each}
        {#each weekdays as d, i}
          <rect x={1125.2 + i * 30.2} y={876.5 - (d.v - 19800) * 0.0656} width="13" height={(d.v - 19800) * 0.0656} fill={d.c} stroke={DARK} stroke-width="1.9" />
          {@render t(1131.7 + i * 30.2, d.ly, String(d.v), 25, 9.8, '#111')}
          <g transform="translate({1134.5 + i * 30.2} 889) rotate(-45)">{@render t(0, 0, d.n, d.w, 8.7, '#3d2a1d', 'end')}</g>
        {/each}
        <path d="M1116.5 876.8H1327.7" stroke="#d5d5d5" stroke-width="1.3" />
        {@render t(1359, 902, 'Store location', 54.5, 9.5, '#7b5130')}
        <g transform="translate(1057.5 816) rotate(-90)">{@render t(0, 0, 'Foodfall', 32, 9.5)}</g>
      </svg>
    </div>
  </div>

  <div class="sheettabs">
    <svg width="103" height="28" viewBox="0 965 103 28"><path d="M34 972V984L28 978ZM57 972V984L63 978Z" fill="#c4c4c4" /></svg>
    <a class="t1"><span use:fit={51}>Sheet1</span></a><a class="t2"><span use:fit={37}>Pivot</span></a><a class="t3 on"><span use:fit={86}>Dashboard</span></a>
    <svg class="plus" width="24" height="24" viewBox="0 0 24 24"><circle cx="12" cy="12" r="9.7" fill="none" stroke="#666" stroke-width="1.3" /><path d="M12 7V17M7 12H17" stroke="#555" stroke-width="1.8" /></svg>
    <svg class="grip" width="4" height="14" viewBox="0 0 4 14"><path d="M2 1V14" stroke="#555" stroke-width="2.5" stroke-dasharray="2.5 2.5" /></svg>
    <div class="hscroll"><svg width="10" height="12" viewBox="0 0 10 12"><path d="M9 1V11L1 6Z" fill="#666" /></svg><i></i><svg width="10" height="12" viewBox="0 0 10 12"><path d="M1 1V11L9 6Z" fill="#666" /></svg></div>
  </div>

  <div class="status">
    <span class="ready" use:fit={36}>Ready</span>
    <svg width="60" height="18" viewBox="75 999 60 18" fill="none" stroke="#444" stroke-width="1.3"><path d="M92 1006V1000.5H76V1014H82M76 1003.5H92M79 1007H82M79 1010H82" /><circle cx="87.5" cy="1010.5" r="4.5" /><circle cx="87.5" cy="1010.5" r="1.8" fill="#444" /><circle cx="122.5" cy="1001.5" r="1.8" /><path d="M116 1003.5L120.5 1006V1010L117.5 1015.5M129.5 1003.5L125 1006V1009L122.5 1011L120 1015.5M124.500 1009L131.500 1016M131.500 1009L124.500 1016" /></svg>
    <span class="acc" use:fit={138}>Accessibility: Investigate</span>
    <div class="views"><svg width="18" height="18" viewBox="0 0 18 18" fill="none" stroke="#444" stroke-width="1.4"><path d="M1.5 1.5H16.5V16.5H1.5ZM1.5 6.5H16.5M1.5 11.5H16.5M6.5 1.5V16.5M11.5 1.5V16.5" /></svg></div>
    <svg class="v2" width="70" height="18" viewBox="1620 998 70 18" fill="none" stroke="#444" stroke-width="1.4"><path d="M1621.5 999H1638.5V1014.5H1621.5ZM1625 1001.5H1635V1012H1625ZM1627 1004.5H1633M1627 1007H1633M1627 1009.5H1633M1671.5 999H1688.5V1014.5H1671.5ZM1671.5 1008H1682V999M1677 999V1008" /></svg>
    <svg class="zoom" width="160" height="18" viewBox="1710 998 160 18" stroke="#555" fill="none"><path d="M1712 1006.5H1721M1859 1006.5H1868M1863.5 1002V1011" stroke-width="1.5" /><path d="M1728 1007.5H1853M1790.5 1003V1012" /><path d="M1761 1000H1767V1014H1761Z" fill="#5c5c5c" stroke="none" /></svg>
    <span class="pct" use:fit={24}>59%</span>
  </div>

  <div class="taskbar">
    {#each apps as a}
      <div class="slot" class:hot={a.hot} class:active={a.active}>
        <svg width="46" height="46" viewBox="-23 -23 46 46">{@html a.art}</svg>
        {#if a.run}<i class:wide={a.run === 'wide'} class:slack={a.run === 'slack'}></i>{/if}
      </div>
    {/each}
    <svg class="tray" width="215" height="30" viewBox="1565 1035 215 30" fill="none" stroke="#f2f2f2" stroke-width="1.6">
      <path d="M1572 1053.5L1578 1047L1584 1053.5" /><g transform="translate(1618 1050) scale(.68)">{@html orb}</g>
      <rect x="1649" y="1042.5" width="17" height="15" rx="2.5" /><path d="M1649 1051.5H1666M1657.5 1051.5V1057" />
      <path d="M1688.5 1047.5Q1698 1038.5 1707.5 1047.5M1691.5 1051Q1698 1044.5 1704.5 1051M1694.5 1054Q1698 1051 1701.5 1054" /><circle cx="1698" cy="1056" r="1" fill="#fff" />
      <path d="M1718.5 1047.5H1721.5L1726 1043.5V1056.5L1721.5 1052.5H1718.5ZM1729 1047Q1731 1050 1729 1053M1732 1045Q1735 1050 1732 1055M1735 1043Q1739.5 1050 1735 1057" stroke-width="1.4" />
      <path d="M1757 1045.5H1765.5V1055.5H1750V1052M1767.5 1048.5V1052.5" /><path d="M1748 1053Q1746 1045 1754 1040.500Q1758 1048 1752 1051Z" fill="#f2f2f2" stroke="none" />
    </svg>
    <div class="clock"><span use:fit={62}>11:13 PM</span><span use:fit={77}>12/13/2024</span></div>
    <svg class="bell" width="20" height="28" viewBox="0 0 20 28"><path d="M10 1C5 1 3.500 5 3.500 9V17L2 22H18L16.500 17V9C16.500 5 15 1 10 1Z" fill="#8fe3fb" /><path d="M7 23.500H13Q12.5 26.500 10 26.500Q7.500 26.500 7 23.500Z" fill="#5fc9ea" /></svg>
  </div>
</div>

<style>
  :global(body) { overflow: hidden; background: #efefef; }
  * { box-sizing: border-box; }
  .app { width: 1918px; height: 1078px; display: flex; flex-direction: column; font-family: "Open Sans", "Noto Sans", sans-serif; font-size: 15px; color: #222; background: #efefef; overflow: hidden; white-space: nowrap; }
  svg { display: block; flex: none; }
  button { font: inherit; color: inherit; border: 0; background: none; padding: 0; margin: 0; }
  i { display: block; }
  span { flex: none; }

  .titlebar { height: 60px; display: flex; align-items: center; padding-left: 20px; flex: none; }
  .autosave { margin-left: 20px; width: 62px; font-size: 13.5px; }
  .toggle { width: 54px; height: 25px; border: 1px solid #555; border-radius: 13px; display: flex; align-items: center; gap: 6px; padding-left: 4px; margin-right: 9px; background: #fff; font-size: 13.5px; color: #444; letter-spacing: -0.5px; }
  .toggle i { width: 18px; height: 18px; border-radius: 50%; background: #616161; }
  .doc { margin-left: 19px; width: 122px; }
  .nolabel { width: 65px; margin-left: 5px; }
  .search { margin-left: 145px; width: 460px; height: 40px; border: 1px solid #d0d0d0; border-bottom-color: #bbb; border-radius: 5px; background: #fafafa; box-shadow: 0 1px 2px rgba(0,0,0,.15); display: flex; align-items: center; gap: 16px; padding-left: 15px; font-size: 16.5px; color: #666; padding-bottom: 2px; }
  .avatar { margin-left: 495px; width: 30px; height: 30px; border-radius: 50%; background: #ca500f; color: #fff; display: grid; place-items: center; font-size: 12.5px; }
  .winbtns { margin-left: 35px; }

  .tabs { height: 38px; display: flex; flex: none; font-size: 17px; }
  .tabs a { height: 35px; display: flex; align-items: center; padding-top: 3px; }
  .tabs a.active { font-weight: 600; border-bottom: 3px solid #0f703b; padding-top: 6px; }
  .actions { display: flex; gap: 10px; margin: 4px 13px 0 auto; }
  .comments, .share { height: 30px; display: flex; align-items: center; border-radius: 4px; gap: 5px; font-size: 16.5px; padding-bottom: 2px; }
  .comments { width: 117px; border: 1px solid #888; background: #fff; padding-left: 6px; }
  .share { width: 89px; background: #107c41; color: #fff; padding-left: 6px; }

  .ribbon { height: 124px; margin: 0 8px 0 10px; width: 1900px; background: #fff; border-radius: 9px; box-shadow: 0 1px 4px rgba(0,0,0,.25); display: flex; flex: none; }
  .group { height: 124px; position: relative; display: flex; flex-direction: column; background: linear-gradient(#ccc, #ccc) right 0 top 6px / 1px 111px no-repeat; }
  .body { height: 98px; display: flex; }
  .body.col { flex-direction: column; }
  .group footer { height: 26px; display: flex; align-items: center; justify-content: center; font-size: 13px; color: #222; padding-bottom: 1px; }
  .launch { position: absolute; right: 4px; bottom: 7px; }
  .clip { width: 129px; } .clip footer { padding-right: 17px; }
  .font { width: 292px; } .font footer { padding-right: 22px; }
  .align { width: 363px; } .align footer { padding-right: 21px; }
  .number { width: 200px; } .number footer { padding-right: 21px; }
  .styles { width: 242px; padding-left: 12px; }
  .cells { width: 181px; padding-left: 10px; }
  .styles footer, .cells footer, .editing footer, .sens footer, .addins footer { padding-bottom: 0; }
  .styles footer { padding-right: 14px; }
  .cells footer { padding-right: 10px; }
  .editing { width: 184px; } .sens { width: 91px; } .addins { width: 77px; } .analyze { width: 78px; }
  .sens .body, .addins .body, .analyze .body { justify-content: center; }
  .big { width: 54px; display: flex; flex-direction: column; align-items: center; line-height: 20px; font-size: 15px; color: #222; }
  .big > svg:first-child { margin-bottom: -1px; }
  .big.low > span { margin-top: 1px; }
  .big > svg + span + svg { margin-top: 6px; }
  .paste { width: 82px; margin-right: -12px; } .cond { width: 87px; } .fmt { width: 78px; } .sort, .editing .big { width: 58px; }
  .edstrip { margin-right: -1px; }
  .l2 { display: flex; align-items: center; gap: 4px; }
  .dis .big, .big.dis { color: #b2b2b2; }
  .combos { display: flex; padding: 14px 0 0 10px; height: 51px; gap: 3px; }
  .combo { height: 30px; border: 1px solid #888; border-radius: 4px; display: flex; align-items: center; justify-content: space-between; padding: 0 2px; font-size: 15.5px; background: #fff; }
  .combo.name { width: 144px; } .combo.size { width: 61px; letter-spacing: -1.5px; }
  .general { margin: 14px 0 0 10px; width: 180px; border-color: #ddd; background: #f0f0f0; color: #aaa; flex: none; }
  .numstrip { margin-top: 7px; }
  .lines { display: flex; flex-direction: column; gap: 17px; padding: 16px 0 0 6px; color: #aaa; }
  .lines div { display: flex; align-items: center; height: 24px; gap: 1px; }
  .mchev { margin-left: 12px; }
  .collapse { margin: 100px 0 0 38px; }

  .formula { height: 48px; display: flex; align-items: center; padding: 1px 0 0 10px; flex: none; }
  .box { height: 30px; background: #fff; border: 1px solid #cfcfcf; border-radius: 5px; display: flex; align-items: center; font-size: 16.5px; }
  .ref { width: 127px; justify-content: space-between; padding: 0 5px 0 6px; color: #333; }
  .fx { width: 107px; margin-right: 5px; }
  .entry { width: 1636px; justify-content: flex-end; padding-right: 4px; }

  .sheet { height: 694px; flex: none; display: grid; grid-template: 14px 680px / 27px 1868px 23px; font-family: "Liberation Sans", sans-serif; }
  .corner { display: flex; justify-content: flex-end; padding: 4px 3px 0 0; }
  .cols { display: flex; overflow: hidden; font-size: 12px; color: #444; }
  .cols div { width: 47.05px; flex: none; text-align: center; line-height: 13px; border-right: 1px solid #d0d0d0; border-bottom: 1px solid #9a9a9a; }
  .cols .frozen { width: 517px; border-bottom: 0; background: linear-gradient(#9a9a9a, #9a9a9a) right bottom / 6px 1px no-repeat; }
  .cols .sel { background: #dcdcdc; color: #0f703b; border-bottom: 2px solid #0f703b; }
  .rows { overflow: hidden; border-right: 1px solid #aaa; font-size: 12px; color: #444; }
  .rows div { height: 14px; line-height: 13px; text-align: center; border-bottom: 1px solid #ccc; letter-spacing: -0.5px; }
  .rows .sel { background: #dcdcdc; color: #0f703b; border-right: 2px solid #0f703b; }
  .vscroll { grid-row: 1 / 3; grid-column: 3; display: flex; flex-direction: column; align-items: center; justify-content: space-between; padding: 5px 0 2px; border-left: 1px solid #bbb; background: #f3f3f3; }
  .vscroll i { width: 11px; height: 624px; background: #2e2e2e; border-radius: 6px; margin-top: 19px; }
  .canvas { position: relative; background: #9c6641; overflow: hidden; font-family: Roboto, "Liberation Sans", sans-serif; grid-row: 2; grid-column: 2; }

  /* Objects float freely on the worksheet grid. */
  .shape, .slicer, .selcell { position: absolute; }
  .s-title { left: 7px; top: 31px; width: 434px; height: 132px; }
  .s-sales { left: 447px; top: 40px; width: 220px; height: 119px; }
  .s-foot { left: 684px; top: 39px; width: 215px; height: 120px; }
  .s-bill { left: 912px; top: 38px; width: 207px; height: 120px; }
  .s-order { left: 1139px; top: 36px; width: 217px; height: 120px; }
  .c1 { left: 224px; top: 183px; width: 362px; height: 212px; }
  .c2 { left: 613px; top: 182px; width: 366px; height: 213px; }
  .c3 { left: 1012px; top: 185px; width: 353px; height: 215px; }
  .c4 { left: 222px; top: 424px; width: 364px; height: 212px; }
  .c5 { left: 608px; top: 422px; width: 370px; height: 214px; }
  .c6 { left: 1012px; top: 424px; width: 358px; height: 212px; }
  .selcell { left: 1455px; top: 138px; width: 50px; height: 17px; border: 2px solid #217346; box-shadow: inset 0 0 0 1px #fff; }
  .selcell i { position: absolute; right: -3px; bottom: -3px; width: 6px; height: 6px; background: #217346; border: 1px solid #fff; border-width: 1px 0 0 1px; }
  .slicer { background: #fff; border: 1px solid #ed7031; font-family: "Liberation Sans", sans-serif; font-size: 12px; color: #111; padding: 2px 5px; display: flex; flex-direction: column; gap: 2px; }
  .sl-month { left: 43px; top: 197px; width: 153px; height: 218px; }
  .sl-day { left: 44px; top: 422px; width: 151px; height: 245px; }
  .slicer header { height: 18px; margin: 0 1px 1px; padding-bottom: 2px; border-bottom: 1px solid #ed7031; display: flex; justify-content: space-between; align-items: center; font-size: 12.5px; }
  .pick { height: 28px; border: 1px solid #979797; border-radius: 4px; background: #f7c7ac; text-align: left; padding-left: 6px; flex: none; }

  .sheettabs { height: 29px; display: flex; flex: none; border-top: 1px solid #9a9a9a; background: #efefef; color: #444; font-size: 16.5px; }
  .sheettabs a { height: 24px; line-height: 20px; display: flex; justify-content: center; padding-right: 2px; }
  .t1 { width: 79px; border-left: 1px solid #999; } .t2 { width: 65px; border-left: 1px solid #bbb; }
  .sheettabs a.on { width: 111px; background: #fff; color: #1a7243; font-weight: 700; height: 26px; border-bottom: 2px solid #1a7243; padding-right: 0; }
  .plus { margin: 2px 0 0 31px; }
  .grip { margin: 7px 0 0 736px; }
  .hscroll { width: 731px; height: 21px; margin: 2px 0 0 13px; background: #f6f6f6; border-radius: 8px; display: flex; align-items: center; justify-content: space-between; padding: 0 5px; }
  .hscroll i { width: 685px; height: 11px; border-radius: 5px; background: #707070; margin-right: 3px; }

  .status { height: 27px; display: flex; flex: none; align-items: center; background: #f4f4f4; font-size: 13px; color: #333; padding-left: 14px; }
  .ready { margin-right: 25px; }
  .acc { margin-left: 2px; }
  .views { margin-left: auto; width: 50px; height: 26px; background: #dedede; display: grid; place-items: center; }
  .v2 { margin: 0 20px 0 15px; }
  .pct { margin: 0 8px 0 16px; }

  .taskbar { height: 58px; background: #1c1c1c; border-top: 1px solid #3b3f3e; display: flex; flex: none; padding-left: 55px; align-items: center; color: #fff; }
  .slot { width: 55.05px; height: 50px; display: flex; flex-direction: column; align-items: center; border-radius: 5px; padding-top: 2px; flex: none; }
  .slot.hot { background: #7d3f45; width: 50px; margin: 0 1.5px 0 3.55px; }
  .slot.active { background: #2a2a2a; box-shadow: inset 0 0 0 1px #383838; width: 50px; margin: 0 2.5px 0 2.55px; }
  .slot i { width: 8px; height: 4px; border-radius: 2px; background: #999; margin-top: -2px; }
  .slot i.wide { width: 20px; background: #4cc2ff; }
  .slot i.slack { width: 8px; background: #d3b3b6; margin-left: -22px; }
  .tray { margin-left: 79px; }
  .clock { width: 86px; display: flex; flex-direction: column; align-items: flex-end; line-height: 20px; font-size: 15px; padding-bottom: 1px; }
  .bell { margin-left: 9px; }
</style>
